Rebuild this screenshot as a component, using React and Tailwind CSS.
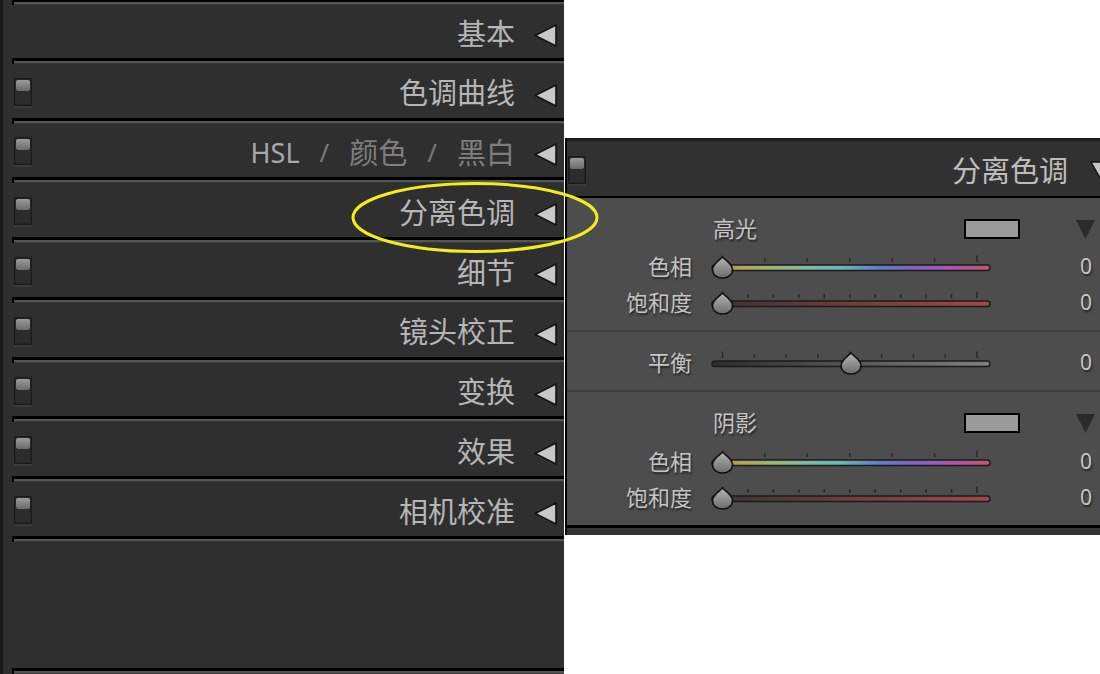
import React from 'react';

const FONT = "font-['Noto_Sans','Noto_Sans_CJK_SC',sans-serif]";

const panels = [
  { name: '基本', toggle: false },
  { name: '色调曲线', toggle: true },
  { name: 'HSL', toggle: true, hsl: true },
  { name: '分离色调', toggle: true },
  { name: '细节', toggle: true },
  { name: '镜头校正', toggle: true },
  { name: '变换', toggle: true },
  { name: '效果', toggle: true },
  { name: '相机校准', toggle: true },
];

function Toggle() {
  return (
    <div className="w-[18px] h-[28px] bg-[#252525] border border-[#1a1a1a] p-[1px] flex flex-col shadow-[0_2px_0_#3a3a3a]">
      <div className="h-[11px] rounded-[2px] bg-linear-to-b from-[#9c9c9c] to-[#6a6a6a]" />
      <div className="flex-1 bg-[#2c2c2c]" />
    </div>
  );
}

function Divider({ first }) {
  return (
    <div className="ml-[9px] border-l-2 border-black">
      <div className={first ? 'h-[2px] bg-black' : 'h-[3px] bg-black'} />
      <div className="h-[2px] bg-[#565656]" />
      <div className="h-[1px] bg-[#393939]" />
    </div>
  );
}

function PanelRow({ panel, first }) {
  return (
    <div className={`flex items-center pt-[4px] ${first ? 'h-[53px]' : 'h-[54px]'}`}>
      <div className="w-[29px] pl-[11px] -mt-[2px]">{panel.toggle && <Toggle />}</div>
      <div className="flex-1 flex justify-end items-center text-[29px] leading-none text-[#b6b6b6]">
        {panel.hsl ? (
          <>
            <span className="text-[27px] text-[#a9a9a9]">HSL</span>
            <span className="mx-[20px] text-[26px] text-[#7a7a7a]">/</span>
            <span className="text-[#7e7e7e]">颜色</span>
            <span className="mx-[20px] text-[26px] text-[#7a7a7a]">/</span>
            <span className="text-[#7e7e7e]">黑白</span>
          </>
        ) : (
          panel.name
        )}
      </div>
      <svg className="ml-[19px] mr-[7px] mt-[5px] shrink-0" width="23" height="23" viewBox="0 0 23 23">
        <polygon points="1.2,11.5 22,1 22,22" fill="#c8c8c8" stroke="#141414" strokeWidth="1.6" strokeLinejoin="round" />
      </svg>
    </div>
  );
}

function Slider({ kind, pos = 12.5 }) {
  const count = { hue: 7, sat: 11, bal: 9 }[kind];
  const step = 254.5 / (count - 1);
  const ticks = Array.from({ length: count }, (_, i) => i);
  const gid = `track-${kind}`;
  const tid = `thumb-${kind}`;
  const cx = pos;
  const thumb = `M ${cx} 6 C ${cx + 3} 9, ${cx + 10} 13, ${cx + 10} 18.5 C ${cx + 10} 23.5, ${cx + 6} 27, ${cx} 27 C ${cx - 6} 27, ${cx - 10} 23.5, ${cx - 10} 18.5 C ${cx - 10} 13, ${cx - 3} 9, ${cx} 6 Z`;
  return (
    <svg className="ml-[18px] shrink-0" width="282" height="30" viewBox="0 0 282 30">
      <defs>
        <linearGradient id={gid} x1="0" x2="1" y1="0" y2="0">
          {kind === 'hue' && (
            <>
              <stop offset="0" stopColor="#a88a52" />
              <stop offset="0.1" stopColor="#b2a262" />
              <stop offset="0.22" stopColor="#9cb478" />
              <stop offset="0.36" stopColor="#7cbaa4" />
              <stop offset="0.47" stopColor="#70b2b6" />
              <stop offset="0.6" stopColor="#627ec0" />
              <stop offset="0.72" stopColor="#7e64c0" />
              <stop offset="0.85" stopColor="#a85ab0" />
              <stop offset="1" stopColor="#c05670" />
            </>
          )}
          {kind === 'sat' && (
            <>
              <stop offset="0" stopColor="#3a3434" />
              <stop offset="1" stopColor="#a84646" />
            </>
          )}
          {kind === 'bal' && (
            <>
              <stop offset="0" stopColor="#2c2c2c" />
              <stop offset="1" stopColor="#808080" />
            </>
          )}
        </linearGradient>
        <linearGradient id={tid} x1="0" x2="0" y1="0" y2="1">
          <stop offset="0" stopColor="#b4b4b4" />
          <stop offset="1" stopColor="#6c6c6c" />
        </linearGradient>
      </defs>
      {ticks.map((i) => {
        const tall = i === 0 || i === count - 1 || (kind === 'bal' && i === 4);
        const x = 12.5 + i * step;
        return <rect key={i} x={x - 0.75} y={tall ? 4.5 : 7} width="1.5" height={tall ? 6.5 : 4} fill="#2a2a2a" />;
      })}
      <rect x="2" y="14" width="278" height="5.5" rx="2.75" fill={`url(#${gid})`} stroke="#1b1b1b" strokeWidth="1.5" />
      <path d={thumb} fill={`url(#${tid})`} stroke="#111" strokeWidth="1.6" />
    </svg>
  );
}

const LABEL = "text-[22px] leading-none text-[#c4c4c4] [text-shadow:1px_2px_2px_rgba(0,0,0,0.55)]";

function HeadRow({ label }) {
  return (
    <div className="h-[36px] flex items-center pl-[146px] pr-[5px]">
      <span className={`flex-1 -mt-[3px] ${LABEL}`}>{label}</span>
      <div className="w-[56px] h-[20px] border-2 border-black bg-[#9a9a9a]" />
      <svg className="ml-[56px] shrink-0" width="19" height="19" viewBox="0 0 19 19">
        <polygon points="0,0 19,0 9.5,19" fill="#2b2b2b" />
      </svg>
    </div>
  );
}

function SliderRow({ label, kind, pos, className = '' }) {
  return (
    <div className={`h-[36px] flex items-center ${className}`}>
      <span className={`w-[125px] text-right ${LABEL}`}>{label}</span>
      <Slider kind={kind} pos={pos} />
      <span className="flex-1 text-right pr-[8px] text-[21px] leading-none text-[#c6c6c6] [text-shadow:1px_2px_2px_rgba(0,0,0,0.55)]">0</span>
    </div>
  );
}

export default function App() {
  return (
    <div className={`relative w-[1100px] h-[674px] overflow-hidden bg-white flex ${FONT}`}>
      {/* Left panel list */}
      <div className="w-[564px] h-full shrink-0 flex bg-[#2f2f2f]">
        <div className="w-[3px] h-full bg-[#1a1a1a]" />
        <div className="flex-1 flex flex-col">
          {panels.map((p, i) => (
            <React.Fragment key={p.name}>
              <Divider first={i === 0} />
              <PanelRow panel={p} first={i === 0} />
            </React.Fragment>
          ))}
          <Divider />
          <div className="h-[126px] shrink-0" />
          <Divider />
        </div>
      </div>

      {/* Split toning panel */}
      <div className="mt-[138px] ml-[1px] w-[535px] self-start border-l-2 border-black">
        <div className="h-[60px] bg-[#313131] border-t-[3px] border-t-[#1f1f1f] border-b-2 border-b-black flex items-center pt-[3px]">
          <div className="ml-[1px]">
            <Toggle />
          </div>
          <span className="flex-1 text-right text-[29px] leading-none text-[#bdbdbd]">分离色调</span>
          <svg className="ml-[22px] shrink-0" width="10" height="20" viewBox="0 0 10 20">
            <polygon points="1,2 19,2 10,18" fill="#c6c6c6" stroke="#161616" strokeWidth="1.5" />
          </svg>
        </div>
        <div className="bg-[#4d4d4d] border-b-[3px] border-black">
          <div className="pt-[13px] pb-[10px]">
            <HeadRow label="高光" />
            <SliderRow label="色相" kind="hue" className="mt-[1px]" />
            <SliderRow label="饱和度" kind="sat" />
          </div>
          <div className="h-[2px] bg-[#3e3e3e]" />
          <div className="pt-[12px] pb-[10px]">
            <SliderRow label="平衡" kind="bal" pos={141} />
          </div>
          <div className="h-[2px] bg-[#3e3e3e]" />
          <div className="pt-[13px] pb-[10px]">
            <HeadRow label="阴影" />
            <SliderRow label="色相" kind="hue" className="mt-[2px]" />
            <SliderRow label="饱和度" kind="sat" />
          </div>
        </div>
        <div className="h-[7px] bg-[#333333]" />
      </div>

      {/* Annotation */}
      <svg className="absolute left-0 top-0 pointer-events-none" width="1100" height="674">
        <ellipse cx="475" cy="217.5" rx="122" ry="34" fill="none" stroke="#f4ec1c" strokeWidth="3" />
      </svg>
    </div>
  );
}
